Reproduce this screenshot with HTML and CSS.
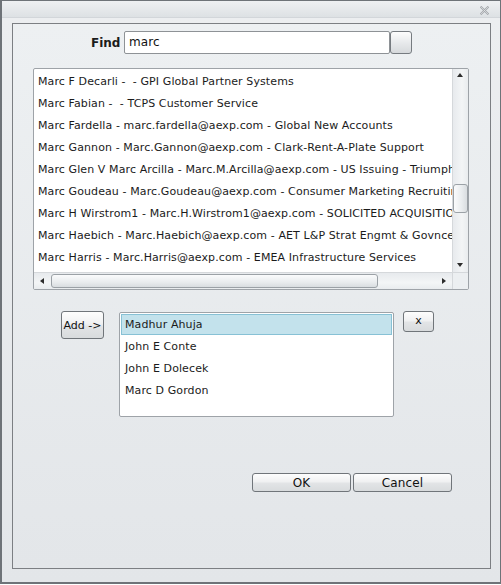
FILE: index.html
```html
<!DOCTYPE html>
<html>
<head>
<meta charset="utf-8">
<link rel="stylesheet" href="styles.css">
</head>
<body>
<div class="window">
  <div class="titlebar">
    <svg class="close" width="9" height="9" viewBox="0 0 9 9">
      <path d="M0.5 0.5 L8.5 8.5 M8.5 0.5 L0.5 8.5" stroke="#a3a7ab" stroke-width="2" fill="none"/>
      <path d="M0.5 0.5 L8.5 8.5 M8.5 0.5 L0.5 8.5" stroke="#eef0f2" stroke-width="0.6" fill="none"/>
    </svg>
  </div>
  <div class="body">
    <div class="panel">
      <div class="find-row">
        <span class="find-label">Find</span>
        <div class="find-input">marc</div>
        <div class="find-btn"></div>
      </div>
      <div class="listbox">
        <div class="list-main">
          <div class="items">
            <div class="item">Marc F Decarli -&nbsp; - GPI Global Partner Systems</div>
            <div class="item">Marc Fabian -&nbsp; - TCPS Customer Service</div>
            <div class="item">Marc Fardella - marc.fardella@aexp.com - Global New Accounts</div>
            <div class="item">Marc Gannon - Marc.Gannon@aexp.com - Clark-Rent-A-Plate Support</div>
            <div class="item">Marc Glen V Marc Arcilla - Marc.M.Arcilla@aexp.com - US Issuing - Triumph</div>
            <div class="item">Marc Goudeau - Marc.Goudeau@aexp.com - Consumer Marketing Recruiting</div>
            <div class="item">Marc H Wirstrom1 - Marc.H.Wirstrom1@aexp.com - SOLICITED ACQUISITION</div>
            <div class="item">Marc Haebich - Marc.Haebich@aexp.com - AET L&amp;P Strat Engmt &amp; Govnce</div>
            <div class="item">Marc Harris - Marc.Harris@aexp.com - EMEA Infrastructure Services</div>
          </div>
          <div class="vscroll">
            <div class="arrow-up"></div>
            <div class="vtrack"><div class="vthumb"></div></div>
            <div class="arrow-down"></div>
          </div>
        </div>
        <div class="hscroll-row">
          <div class="hscroll">
            <div class="arrow-left"></div>
            <div class="htrack"><div class="hthumb"></div></div>
            <div class="arrow-right"></div>
          </div>
          <div class="corner"></div>
        </div>
      </div>
      <div class="pick-row">
        <div class="btn add-btn">Add -&gt;</div>
        <div class="selected">
          <div class="sel-item active">Madhur Ahuja</div>
          <div class="sel-item">John E Conte</div>
          <div class="sel-item">John E Dolecek</div>
          <div class="sel-item">Marc D Gordon</div>
        </div>
        <div class="btn x-btn">x</div>
      </div>
      <div class="actions">
        <div class="btn act-btn">OK</div>
        <div class="btn act-btn">Cancel</div>
      </div>
    </div>
  </div>
</div>
</body>
</html>
```
FILE: styles.css
```css
* { box-sizing: border-box; }
html, body { margin: 0; padding: 0; background: #ffffff; }
body {
  font-family: "DejaVu Sans", Verdana, sans-serif;
  font-size: 11px;
  color: #1b1b1b;
  letter-spacing: 0.1px;
}
.window {
  width: 501px;
  height: 584px;
  border: 2px solid #6e7378;
  border-top-width: 1px;
  border-right-width: 1px;
  background: #e5e8eb;
  display: flex;
  flex-direction: column;
}
.titlebar {
  height: 17px;
  background: linear-gradient(#eef0f2, #dde1e4);
  border-bottom: 1px solid #d2d6da;
  display: flex;
  justify-content: flex-end;
  align-items: center;
  padding-right: 11px;
  flex: none;
}
.close { display: block; margin-top: 2px; }
.body {
  flex: 1;
  padding: 5px 9px 13px 10px;
  display: flex;
  background: linear-gradient(#eceef0, #e3e6e9);
}
.panel {
  flex: 1;
  min-width: 0;
  border: 1px solid #7c7f83;
  background: linear-gradient(#edf0f2, #e3e6e9);
  padding: 7px 21px 0 20px;
  display: flex;
  flex-direction: column;
}
.find-row {
  display: flex;
  align-items: center;
  height: 23px;
  padding-left: 58px;
}
.find-label {
  font-weight: bold;
  font-size: 12px;
  width: 33px;
  letter-spacing: 0;
}
.find-input {
  width: 266px;
  height: 23px;
  border: 1px solid #8e9296;
  border-radius: 2px;
  background: #fff;
  padding: 3px 0 0 4px;
  font-size: 12px;
  color: #111;
}
.find-btn {
  width: 22px;
  height: 23px;
  border: 1px solid #767b80;
  border-radius: 3px;
  background: linear-gradient(#fdfdfd, #e8eaec 50%, #d6d9dc);
}
.listbox {
  margin-top: 14px;
  height: 222px;
  min-width: 0;
  border: 1px solid #9ea3a8;
  border-radius: 2px;
  background: #fff;
  display: flex;
  flex-direction: column;
  overflow: hidden;
}
.list-main {
  flex: 1;
  display: flex;
  min-height: 0;
  min-width: 0;
}
.items {
  flex: 1;
  min-width: 0;
  overflow: hidden;
  padding: 2px 0 0 4px;
}
.item {
  height: 22px;
  line-height: 22px;
  white-space: nowrap;
}
.vscroll {
  width: 16px;
  flex: none;
  border-left: 1px solid #d5d8db;
  background: linear-gradient(90deg, #e7eaed, #f3f5f6 60%, #e9ecee);
  display: flex;
  flex-direction: column;
  align-items: center;
}
.arrow-up, .arrow-down {
  height: 14px;
  width: 100%;
  position: relative;
  flex: none;
}
.arrow-up::after {
  content: "";
  position: absolute;
  left: 4px; top: 4px;
  border-left: 3px solid transparent;
  border-right: 3px solid transparent;
  border-bottom: 4px solid #2c2c2c;
}
.arrow-down::after {
  content: "";
  position: absolute;
  left: 4px; top: 5px;
  border-left: 3px solid transparent;
  border-right: 3px solid transparent;
  border-top: 4px solid #2c2c2c;
}
.vtrack {
  flex: 1;
  width: 100%;
  padding-top: 101px;
  display: flex;
  justify-content: center;
}
.vthumb {
  width: 15px;
  height: 29px;
  border: 1px solid #9ba1a6;
  border-radius: 3px;
  background: linear-gradient(90deg, #fafbfc, #e9ecee 60%, #d9dde0);
}
.hscroll-row {
  height: 17px;
  flex: none;
  display: flex;
  border-top: 1px solid #d5d8db;
}
.hscroll {
  flex: 1;
  min-width: 0;
  display: flex;
  align-items: center;
  background: linear-gradient(#e7eaed, #f3f5f6 60%, #e9ecee);
}
.arrow-left, .arrow-right {
  width: 17px;
  height: 100%;
  position: relative;
  flex: none;
}
.arrow-left::after {
  content: "";
  position: absolute;
  left: 6px; top: 5px;
  border-top: 3px solid transparent;
  border-bottom: 3px solid transparent;
  border-right: 4px solid #2c2c2c;
}
.arrow-right::after {
  content: "";
  position: absolute;
  left: 7px; top: 5px;
  border-top: 3px solid transparent;
  border-bottom: 3px solid transparent;
  border-left: 4px solid #2c2c2c;
}
.htrack { flex: 1; height: 100%; display: flex; align-items: center; }
.hthumb {
  width: 327px;
  height: 14px;
  border: 1px solid #9ba1a6;
  border-radius: 3px;
  background: linear-gradient(#fafbfc, #e9ecee 60%, #d9dde0);
}
.corner {
  width: 16px;
  flex: none;
  border-left: 1px solid #d5d8db;
  background: #eceff1;
}
.pick-row {
  display: flex;
  align-items: flex-start;
  margin-top: 21px;
  padding-left: 28px;
}
.btn {
  border: 1px solid #70757a;
  border-radius: 3px;
  background: linear-gradient(#fdfdfd, #f0f1f2 45%, #e2e4e6 55%, #d8dbdd);
  display: flex;
  align-items: center;
  justify-content: center;
  font-size: 11px;
  color: #111;
  white-space: nowrap;
  flex: none;
}
.add-btn {
  width: 43px;
  height: 28px;
  letter-spacing: 0;
}
.selected {
  margin-left: 15px;
  margin-top: 1px;
  width: 275px;
  height: 105px;
  border: 1px solid #9ea3a8;
  border-radius: 2px;
  background: #fff;
  padding: 1px;
}
.sel-item {
  height: 22px;
  line-height: 22px;
  padding-left: 3px;
  border: 1px solid transparent;
}
.sel-item.active {
  height: 21px;
  line-height: 20px;
  background: #c3e2ec;
  border-color: #87c1d5;
}
.x-btn {
  margin-left: 9px;
  width: 31px;
  height: 21px;
  padding-bottom: 3px;
}
.actions {
  display: flex;
  gap: 2px;
  margin-top: 56px;
  padding-left: 219px;
}
.act-btn {
  width: 99px;
  height: 19px;
  font-size: 12px;
}
```
